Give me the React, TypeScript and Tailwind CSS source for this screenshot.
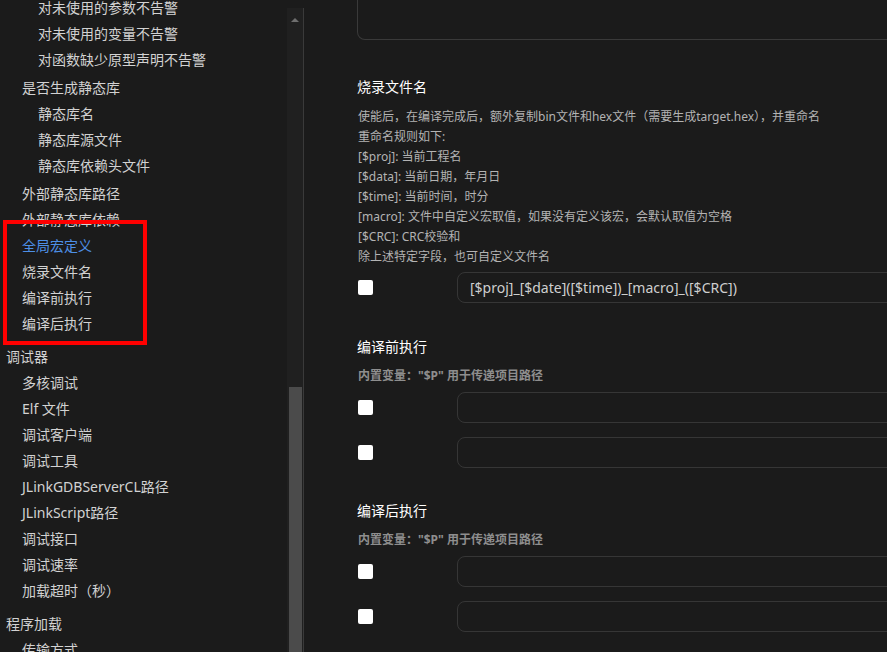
import React from "react";

type Item = { label: string; level: 0 | 1 | 2; gap?: string; active?: boolean };

const items: Item[] = [
  { label: "对未使用的参数不告警", level: 2 },
  { label: "对未使用的变量不告警", level: 2 },
  { label: "对函数缺少原型声明不告警", level: 2 },
  { label: "是否生成静态库", level: 1, gap: "mt-[2px]" },
  { label: "静态库名", level: 2 },
  { label: "静态库源文件", level: 2 },
  { label: "静态库依赖头文件", level: 2 },
  { label: "外部静态库路径", level: 1, gap: "mt-[2px]" },
  { label: "外部静态库依赖", level: 1 },
  { label: "全局宏定义", level: 1, active: true },
  { label: "烧录文件名", level: 1 },
  { label: "编译前执行", level: 1 },
  { label: "编译后执行", level: 1 },
  { label: "调试器", level: 0, gap: "mt-[7px]" },
  { label: "多核调试", level: 1 },
  { label: "Elf 文件", level: 1 },
  { label: "调试客户端", level: 1 },
  { label: "调试工具", level: 1 },
  { label: "JLinkGDBServerCL路径", level: 1 },
  { label: "JLinkScript路径", level: 1 },
  { label: "调试接口", level: 1 },
  { label: "调试速率", level: 1 },
  { label: "加载超时（秒）", level: 1 },
  { label: "程序加载", level: 0, gap: "mt-[7px]" },
  { label: "传输方式", level: 1 },
];

const indent = { 0: "pl-[6px]", 1: "pl-[22px]", 2: "pl-[38px]" };

function Sidebar() {
  return (
    <div className="relative w-[287px] shrink-0">
      <ul className="-mt-[6px]">
        {items.map((it) => (
          <li
            key={it.label}
            className={`h-[26px] flex items-center text-[14px] whitespace-nowrap ${indent[it.level]} ${it.gap ?? ""} ${
              it.active ? "text-[#4d8fe6]" : "text-[#d2d2d2]"
            }`}
          >
            {it.label}
          </li>
        ))}
      </ul>
      {/* annotation box */}
      <div className="absolute left-[3px] top-[220px] w-[144px] h-[125px] border-[4px] border-[#ff0000]" />
    </div>
  );
}

function Scrollbar() {
  return (
    <div className="w-[17px] shrink-0 pt-[8px] flex">
      <div className="flex-1 bg-[#202020] flex flex-col">
        <div className="h-[14px] flex items-end justify-center pr-[1px]">
          <div className="w-0 h-0 border-l-[4px] border-r-[4px] border-b-[4px] border-l-transparent border-r-transparent border-b-[#6e6e6e]" />
        </div>
        <div className="h-[365px]" />
        <div className="ml-[2px] w-[13px] flex-1 bg-[#4b4b4b]" />
      </div>
      <div className="w-px bg-[#3a3a3a]" />
    </div>
  );
}

function Row({ value }: { value?: string }) {
  return (
    <div className="flex items-center h-[31px]">
      <div className="w-[15px] h-[15px] bg-white rounded-[2px] shrink-0" />
      <div className="ml-[84px] w-[520px] h-[31px] shrink-0 rounded-lg border border-[#363636] flex items-center px-[12px] text-[14px] text-[#cfcfcf] whitespace-nowrap">
        {value}
      </div>
    </div>
  );
}

function Section({
  title,
  className,
  children,
}: {
  title: string;
  className: string;
  children: React.ReactNode;
}) {
  return (
    <div className={className}>
      <div className="text-[14px] leading-[20px] text-white">{title}</div>
      {children}
    </div>
  );
}

export default function App() {
  return (
    <div className="flex h-[652px] w-[887px] overflow-hidden bg-[#1b1b1b] font-['Noto_Sans','Noto_Sans_CJK_SC',sans-serif]">
      <Sidebar />
      <Scrollbar />
      <div className="flex-1 pl-[53px] min-w-0">
        <div className="w-[600px] h-[40px] border-x border-b border-[#3a3a3a] rounded-b-lg" />

        <Section title="烧录文件名" className="mt-[37px]">
          <div className="mt-[10px] text-[12px] leading-[20px] text-[#b3b3b3] whitespace-nowrap pl-px">
            <div>使能后，在编译完成后，额外复制bin文件和hex文件（需要生成target.hex），并重命名</div>
            <div>重命名规则如下:</div>
            <div>[$proj]: 当前工程名</div>
            <div>[$data]: 当前日期，年月日</div>
            <div>[$time]: 当前时间，时分</div>
            <div>[macro]: 文件中自定义宏取值，如果没有定义该宏，会默认取值为空格</div>
            <div>[$CRC]: CRC校验和</div>
            <div>除上述特定字段，也可自定义文件名</div>
          </div>
          <div className="mt-[5px] pl-px">
            <Row value="[$proj]_[$date]([$time])_[macro]_([$CRC])" />
          </div>
        </Section>

        <Section title="编译前执行" className="mt-[34px]">
          <div className="mt-[9px] text-[12px] leading-[20px] font-bold text-[#8e8e8e] pl-px">
            内置变量："$P" 用于传递项目路径
          </div>
          <div className="mt-[6px] flex flex-col gap-[14px] pl-px">
            <Row />
            <Row />
          </div>
        </Section>

        <Section title="编译后执行" className="mt-[33px]">
          <div className="mt-[9px] text-[12px] leading-[20px] font-bold text-[#8e8e8e] pl-px">
            内置变量："$P" 用于传递项目路径
          </div>
          <div className="mt-[6px] flex flex-col gap-[14px] pl-px">
            <Row />
            <Row />
          </div>
        </Section>
      </div>
    </div>
  );
}
